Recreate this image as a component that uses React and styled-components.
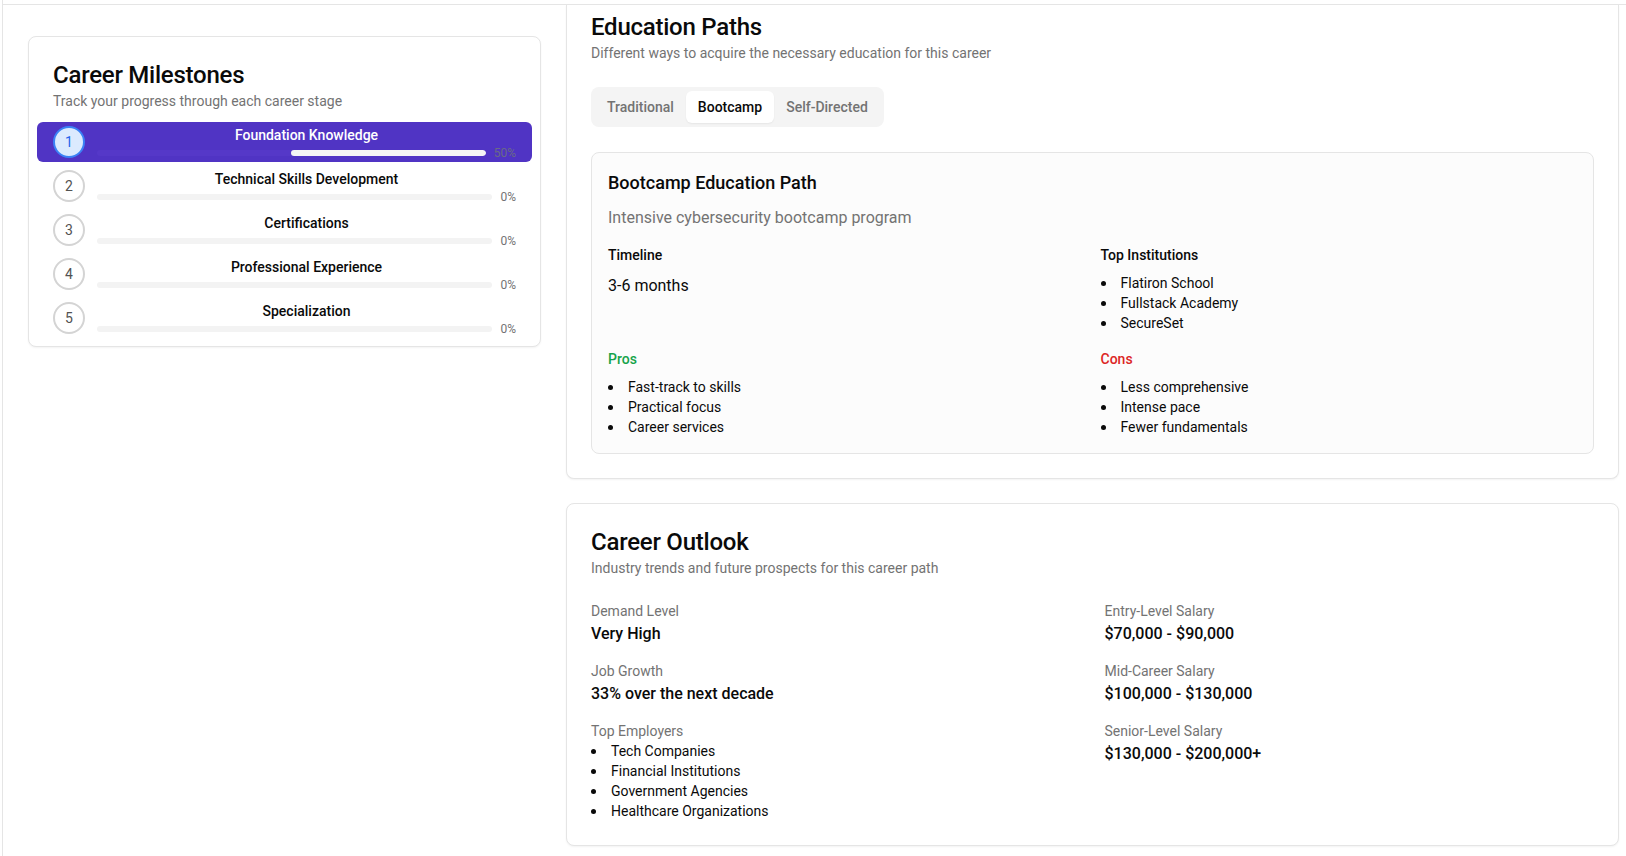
import React from "react"
import styled, { createGlobalStyle } from "styled-components"

const GlobalStyle = createGlobalStyle`
  body {
    margin: 0;
    font-family: Roboto, "Noto Sans", "Liberation Sans", sans-serif;
    color: #0a0a0a;
    background: #ffffff;
  }
  * {
    box-sizing: border-box;
  }
`

const milestones = [
  { title: "Foundation Knowledge", progress: 50 },
  { title: "Technical Skills Development", progress: 0 },
  { title: "Certifications", progress: 0 },
  { title: "Professional Experience", progress: 0 },
  { title: "Specialization", progress: 0 },
]

const Frame = styled.div`
  margin-left: 2px;
  border-left: 1px solid #e5e5e5;
  min-height: 100vh;
  overflow: hidden;
`

const TopRule = styled.div`
  height: 5px;
  border-bottom: 1px solid #e5e5e5;
`

const Layout = styled.div`
  display: grid;
  grid-template-columns: 513px 1fr;
  column-gap: 25px;
  padding: 0 7px 0 25px;
  align-items: start;
`

const Column = styled.div`
  display: flex;
  flex-direction: column;
  gap: 24px;
`

const Card = styled.div`
  background: #ffffff;
  border: 1px solid #e5e5e5;
  border-radius: 8px;
  box-shadow: 0 1px 2px rgba(0, 0, 0, 0.05);
  margin-top: ${p => (p.$offset ? "31px" : "0")};
  ${p =>
    p.$flush &&
    `
    border-top: none;
    border-top-left-radius: 0;
    border-top-right-radius: 0;
  `}
`

const CardHeader = styled.div`
  padding: ${p => (p.$flush ? "6px" : "22px")} 24px 0;
`

const CardTitle = styled.h2`
  margin: 0;
  font-size: 24px;
  line-height: 32px;
  font-weight: 500;
  letter-spacing: -0.01em;
`

const CardSubtitle = styled.p`
  margin: 0;
  font-size: 14px;
  line-height: 20px;
  color: #737373;
`

const CardBody = styled.div`
  padding: 0 24px 24px;
`

const MilestoneList = styled.div`
  display: flex;
  flex-direction: column;
  gap: 4px;
  padding: 11px 8px 8px;
`

const MilestoneRow = styled.div`
  display: flex;
  align-items: center;
  gap: 12px;
  height: 40px;
  padding: 0 16px;
  border-radius: 6px;
  background: ${p => (p.$active ? "#5034c4" : "transparent")};
`

const StepCircle = styled.div`
  flex: none;
  width: 32px;
  height: 32px;
  border-radius: 50%;
  border: 2px solid ${p => (p.$active ? "#3b82f6" : "#d4d4d4")};
  background: ${p => (p.$active ? "#dbeafe" : "#ffffff")};
  color: ${p => (p.$active ? "#2563eb" : "#525252")};
  font-size: 14px;
  display: flex;
  align-items: center;
  justify-content: center;
`

const MilestoneBody = styled.div`
  flex: 1;
  display: flex;
  flex-direction: column;
  padding-top: 2px;
`

const MilestoneTitle = styled.div`
  text-align: center;
  font-size: 14px;
  line-height: 20px;
  font-weight: 500;
  color: ${p => (p.$active ? "#ffffff" : "#0a0a0a")};
`

const BarRow = styled.div`
  display: flex;
  align-items: center;
  gap: 8px;
  height: 16px;
`

const Track = styled.div`
  flex: 1;
  height: 6px;
  border-radius: 999px;
  display: flex;
  justify-content: flex-end;
  overflow: hidden;
  background: ${p => (p.$active ? "#5538c8" : "#f3f3f3")};
`

const Fill = styled.div`
  height: 100%;
  border-radius: 999px;
  background: #f5f5f5;
`

const Percent = styled.span`
  font-size: 12px;
  line-height: 16px;
  color: ${p => (p.$active ? "#6a6a86" : "#737373")};
`

const TabList = styled.div`
  display: inline-flex;
  align-items: center;
  height: 40px;
  padding: 4px;
  margin-top: 24px;
  border-radius: 8px;
  background: #f4f4f4;
`

const Tab = styled.button`
  height: 32px;
  padding: 0 12px;
  border: none;
  border-radius: 6px;
  font-family: inherit;
  font-size: 14px;
  font-weight: 500;
  cursor: pointer;
  color: ${p => (p.$active ? "#0a0a0a" : "#737373")};
  background: ${p => (p.$active ? "#ffffff" : "transparent")};
  box-shadow: ${p => (p.$active ? "0 1px 2px rgba(0,0,0,0.06)" : "none")};
`

const PathCard = styled.div`
  margin-top: 25px;
  padding: 16px;
  border: 1px solid #e5e5e5;
  border-radius: 8px;
  background: #fcfcfc;
`

const PathTitle = styled.h3`
  margin: 0;
  font-size: 18px;
  line-height: 28px;
  font-weight: 500;
`

const PathDesc = styled.p`
  margin: 9px 0 0;
  font-size: 16px;
  line-height: 24px;
  color: #737373;
`

const TwoCol = styled.div`
  display: grid;
  grid-template-columns: 1fr 1fr;
  gap: ${p => p.$gap || "16px"};
  margin-top: ${p => p.$top || "15px"};
`

const BlockLabel = styled.div`
  font-size: 14px;
  line-height: 20px;
  font-weight: 500;
  color: ${p =>
    p.$tone === "good" ? "#16a34a" : p.$tone === "bad" ? "#dc2626" : "#0a0a0a"};
`

const BlockValue = styled.div`
  margin-top: 8px;
  font-size: 16px;
  line-height: 26px;
`

const BulletList = styled.ul`
  margin: ${p => p.$top || "8px"} 0 0;
  padding: 0;
  list-style: none;

  li {
    display: flex;
    align-items: center;
    font-size: 14px;
    line-height: 20px;
  }

  li::before {
    content: "";
    flex: none;
    width: 5px;
    height: 5px;
    margin: 0 15px 0 0;
    border-radius: 50%;
    background: #0a0a0a;
  }
`

const StatColumn = styled.div`
  display: flex;
  flex-direction: column;
  gap: 14px;
`

const StatLabel = styled.div`
  font-size: 14px;
  line-height: 20px;
  color: #737373;
`

const StatValue = styled.div`
  font-size: 16px;
  line-height: 26px;
  font-weight: 500;
`

const Milestones = () => (
  <Card $offset>
    <CardHeader>
      <CardTitle>Career Milestones</CardTitle>
      <CardSubtitle>Track your progress through each career stage</CardSubtitle>
    </CardHeader>
    <MilestoneList>
      {milestones.map((m, i) => {
        const active = i === 0
        return (
          <MilestoneRow key={m.title} $active={active}>
            <StepCircle $active={active}>{i + 1}</StepCircle>
            <MilestoneBody>
              <MilestoneTitle $active={active}>{m.title}</MilestoneTitle>
              <BarRow>
                <Track $active={active}>
                  <Fill style={{ width: `${m.progress}%` }} />
                </Track>
                <Percent $active={active}>{m.progress}%</Percent>
              </BarRow>
            </MilestoneBody>
          </MilestoneRow>
        )
      })}
    </MilestoneList>
  </Card>
)

const EducationPaths = () => {
  const tabs = ["Traditional", "Bootcamp", "Self-Directed"]
  return (
    <Card $flush>
      <CardHeader $flush>
        <CardTitle>Education Paths</CardTitle>
        <CardSubtitle>
          Different ways to acquire the necessary education for this career
        </CardSubtitle>
      </CardHeader>
      <CardBody>
        <TabList>
          {tabs.map(t => (
            <Tab key={t} $active={t === "Bootcamp"}>
              {t}
            </Tab>
          ))}
        </TabList>
        <PathCard>
          <PathTitle>Bootcamp Education Path</PathTitle>
          <PathDesc>Intensive cybersecurity bootcamp program</PathDesc>
          <TwoCol>
            <div>
              <BlockLabel>Timeline</BlockLabel>
              <BlockValue>3-6 months</BlockValue>
            </div>
            <div>
              <BlockLabel>Top Institutions</BlockLabel>
              <BulletList>
                <li>Flatiron School</li>
                <li>Fullstack Academy</li>
                <li>SecureSet</li>
              </BulletList>
            </div>
            <div>
              <BlockLabel $tone="good">Pros</BlockLabel>
              <BulletList>
                <li>Fast-track to skills</li>
                <li>Practical focus</li>
                <li>Career services</li>
              </BulletList>
            </div>
            <div>
              <BlockLabel $tone="bad">Cons</BlockLabel>
              <BulletList>
                <li>Less comprehensive</li>
                <li>Intense pace</li>
                <li>Fewer fundamentals</li>
              </BulletList>
            </div>
          </TwoCol>
        </PathCard>
      </CardBody>
    </Card>
  )
}

const CareerOutlook = () => (
  <Card>
    <CardHeader>
      <CardTitle>Career Outlook</CardTitle>
      <CardSubtitle>Industry trends and future prospects for this career path</CardSubtitle>
    </CardHeader>
    <CardBody>
      <TwoCol $gap="24px" $top="23px">
        <StatColumn>
          <div>
            <StatLabel>Demand Level</StatLabel>
            <StatValue>Very High</StatValue>
          </div>
          <div>
            <StatLabel>Job Growth</StatLabel>
            <StatValue>33% over the next decade</StatValue>
          </div>
          <div>
            <StatLabel>Top Employers</StatLabel>
            <BulletList $top="0">
              <li>Tech Companies</li>
              <li>Financial Institutions</li>
              <li>Government Agencies</li>
              <li>Healthcare Organizations</li>
            </BulletList>
          </div>
        </StatColumn>
        <StatColumn>
          <div>
            <StatLabel>Entry-Level Salary</StatLabel>
            <StatValue>$70,000 - $90,000</StatValue>
          </div>
          <div>
            <StatLabel>Mid-Career Salary</StatLabel>
            <StatValue>$100,000 - $130,000</StatValue>
          </div>
          <div>
            <StatLabel>Senior-Level Salary</StatLabel>
            <StatValue>$130,000 - $200,000+</StatValue>
          </div>
        </StatColumn>
      </TwoCol>
    </CardBody>
  </Card>
)

export default function App() {
  return (
    <>
      <GlobalStyle />
      <Frame>
        <TopRule />
        <Layout>
          <Milestones />
          <Column>
            <EducationPaths />
            <CareerOutlook />
          </Column>
        </Layout>
      </Frame>
    </>
  )
}
